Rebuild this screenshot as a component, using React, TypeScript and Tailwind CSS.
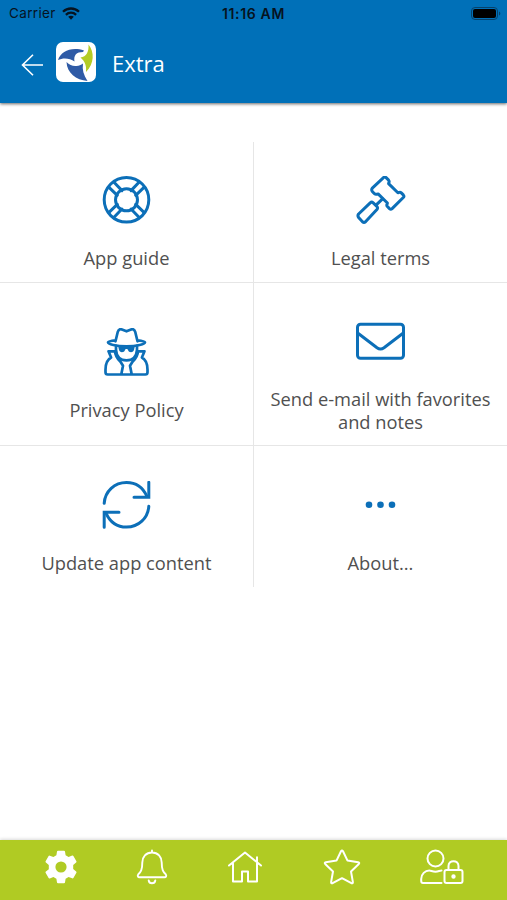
import type { ReactNode } from 'react'

export default function App() {
  return (
    <div className="flex h-[900px] w-[507px] flex-col overflow-hidden bg-white font-['Open_Sans',sans-serif]">
      <Header />
      <Menu />
      <BottomNav />
    </div>
  )
}

function StatusBar() {
  return (
    <div className="grid h-[26px] grid-cols-3 items-center pl-[9px] pr-[6px] font-[Inter,sans-serif] text-[13.5px] text-[#06131f]">
      <div className="flex items-center gap-[6px]">
        <span className="tracking-[0.35px]">Carrier</span>
        <svg width="18" height="13" viewBox="0 0 18 13" fill="none" stroke="currentColor" strokeWidth="2.3">
          <path d="M1 4.8C5.5.4 12.5.4 17 4.8" />
          <path d="M3.9 7.8c2.9-2.8 7.3-2.8 10.2 0" />
          <path d="M6.2 9.8c1.600-1.400 4-1.400 5.600 0L9 12.700z" fill="currentColor" stroke="none" />
        </svg>
      </div>
      <span className="-ml-[3px] text-center text-[14px] font-semibold tracking-[0.65px]">11:16 AM</span>
      <svg className="justify-self-end" width="30" height="13" viewBox="0 0 30 13">
        <rect x=".5" y=".5" width="26" height="12" rx="3.5" fill="none" stroke="#06426b" />
        <rect x="2" y="2" width="23" height="9" rx="2" fill="#000" />
        <path d="M28 4.500c1.800.6 1.800 3.400 0 4z" fill="#06426b" />
      </svg>
    </div>
  )
}

function Header() {
  return (
    <header className="relative h-[103px] shrink-0 bg-[#0070b8] shadow-[0_1px_3px_rgba(0,0,0,0.6)]">
      <StatusBar />
      <div className="flex h-[72px] items-center pl-[21px] text-white">
        <svg className="mt-[5px]" width="23" height="22" viewBox="0 0 23 22" fill="none" stroke="currentColor" strokeWidth="1.6">
          <path d="M22 11H1.500M12 .8L1.500 11 12 21.200" />
        </svg>
        <Logo />
        <h1 className="ml-[16px] mt-[2px] text-[22px] leading-7">Extra</h1>
      </div>
    </header>
  )
}

function Logo() {
  return (
    <svg className="ml-3" width="40" height="40" viewBox="0 0 40 40">
      <rect width="40" height="40" rx="7" fill="#fff" />
      <path d="M2 18C5 9.500 15 4.500 28 8.500l-1 1.500C20.500 10 17.500 13 18.500 19.500 14 16 7 15.500 2 18z" fill="#2f5ba6" />
      <path d="M32.500 2.500C38.500 10 38.500 21.500 30 30c.5-6-.5-10-5.500-14.500 6-.5 8.500-6 8-13z" fill="#b4cc25" />
      <path d="M10.500 20c3 3 6.500 4.500 10 4 2.500-.2 4.500-1 6.500-2.500-1 6 .5 11.500 4.500 17.500C20 38 11 31 10.500 20z" fill="#2f5ba6" />
    </svg>
  )
}

function Menu() {
  return (
    <main className="flex-1 pt-[39px]">
      <div className="grid grid-cols-[254px_253px] grid-rows-[141px_163px_141px]">
        <Tile label="App guide" className="border-b border-r" icon={<LifeRing />} />
        <Tile label="Legal terms" className="border-b" icon={<Gavel />} />
        <Tile label="Privacy Policy" className="border-b border-r" icon={<Spy />} />
        <Tile label="Send e-mail with favorites and notes" className="border-b" icon={<Envelope />} />
        <Tile label="Update app content" className="border-r" icon={<Sync />} />
        <Tile label="About..." icon={<Dots />} />
      </div>
    </main>
  )
}

function Tile({ label, icon, className = '' }: { label: string; icon: ReactNode; className?: string }) {
  return (
    <button type="button" className={`flex flex-col items-center justify-center border-[#e6e6e6] px-3 pb-3 pt-[33px] ${className}`}>
      {icon}
      <span className="mt-[22px] text-[18.300px] leading-[23px] text-[#505050]">{label}</span>
    </button>
  )
}

function TileIcon({ children }: { children: ReactNode }) {
  return (
    <svg className="shrink-0" width="50" height="48" viewBox="-0.500 0.200 50 48" fill="none" stroke="#0c6fb8" strokeWidth="3" strokeLinecap="round" strokeLinejoin="round">
      {children}
    </svg>
  )
}

function LifeRing() {
  return (
    <TileIcon>
      <circle cx="24" cy="24" r="22.300" />
      <circle cx="24" cy="24" r="11" />
      <path d="M6.500 11.500l8.300 8M11.500 6.500l8 8.300M41.500 11.500l-8.300 8M36.500 6.500l-8 8.300M6.500 36.500l8.300-8M11.500 41.500l8-8.300M41.500 36.500l-8.300-8M36.500 41.500l-8-8.300" />
    </TileIcon>
  )
}

function Gavel() {
  return (
    <TileIcon>
      <path d="M15.800 12.300L27 1.800q1.300-1.200 2.600 0l2.500 2.500q1 1.200.2 2.700l-.2.800 9.300 9.200 1-.3q1.300-.6 2.400.4l2 2q1.200 1.300 0 2.600L35.600 32.800q-1.300 1.200-2.600 0l-2.100-2.100q-1-1.100-.3-2.500l.3-1-9.300-9.100-1 .2q-1.500.6-2.600-.4l-2.200-2.200q-1.200-1.700 0-3.400z" />
      <path d="M26 23l-6.500 6.300" />
      <path d="M2.100 38.200L13.700 27q1.500-1.300 3 0l3.700 3.600q1.300 1.500 0 3L9 46q-1.500 1.200-3 0l-3.900-4.200q-1.300-1.800 0-3.600z" />
    </TileIcon>
  )
}

function Spy() {
  return (
    <TileIcon>
      <path d="M13 13.500l2.300-9.500q.9-3 3.500-2.500l5.200 2 5.200-2q2.600-.5 3.500 2.500l2.300 9.500M13 12.500c-3 .3-7.200 1-7.500 2 0 2 8 4 18.500 4s18.500-2 18.500-4c-.3-1-4.500-1.700-7.500-2" strokeWidth="2.700" />
      <path d="M13.500 18v4C14 29.500 18.500 32.500 24 32.500S34 29.500 34.500 22v-4" strokeWidth="2.700" />
      <path d="M15.500 17.500h17l-.8 4c-.6 3.800-5.400 3.700-6.200.7-.4-1.400-2.600-1.400-3 0-.8 3-5.600 3.100-6.200-.7z" fill="#0c6fb8" stroke="none" />
      <path d="M12.500 23.500H6l2.600 6.200C5.200 31.500 3 36.500 3 42v2.500q0 2.200 2.200 2.200h37.600q2.200 0 2.200-2.200V42c0-5.500-2.200-10.500-5.600-12.300l2.600-6.200h-6.500M12.500 23.500c.3 5 2.500 7.500 5.500 10.500l2.500 4-1.700 8.500M35.500 23.500c-.3 5-2.500 7.500-5.500 10.500l-2.500 4 1.700 8.500" strokeWidth="2.700" />
    </TileIcon>
  )
}

function Envelope() {
  return (
    <TileIcon>
      <rect x="1" y="7.500" width="46" height="34" rx="3" />
      <path d="M1.500 16.500l19 14.500q3.500 2.500 7 0l19-14.500" />
    </TileIcon>
  )
}

function Sync() {
  return (
    <TileIcon>
      <path d="M1.700 22.500C2.500 10.500 12 1.700 24 1.700c9 0 16.500 5 20.500 14M46.300 25.500C45.500 37.500 36 46.300 24 46.300c-9 0-16.500-5-20.500-14" />
      <path d="M46.300 1.500v15H31.500M1.700 46.500v-15h14.800" strokeLinejoin="miter" />
    </TileIcon>
  )
}

function Dots() {
  return (
    <TileIcon>
      <g fill="#0c6fb8" stroke="none">
        <circle cx="12.500" cy="24" r="3.300" />
        <circle cx="24" cy="24" r="3.300" />
        <circle cx="35.500" cy="24" r="3.300" />
      </g>
    </TileIcon>
  )
}

function BottomNav() {
  return (
    <nav className="flex h-[60px] items-center bg-[#b0cb23] pb-[6px] pl-[44px] text-white shadow-[0_-1px_3px_rgba(0,0,0,0.15)]">
      <svg width="34" height="34" viewBox="0 0 34 34" fill="currentColor" fillRule="evenodd">
        <path d="M13 1.500q.2-.8 1-.8h6q.8 0 1 .8l.6 3.800 3 1.700 3.600-1.400q.8-.3 1.200.4l3 5.200q.4.700-.3 1.200l-2.900 2.500v4.200l2.900 2.400q.7.500.3 1.200l-3 5.200q-.4.700-1.200.4l-3.600-1.300-3 1.700-.6 3.800q-.2.800-1 .8h-6q-.8 0-1-.8l-.6-3.800-3-1.700L5.800 28.400q-.8.300-1.200-.4l-3-5.200q-.4-.7.300-1.200l2.900-2.400v-4.200l-2.900-2.500q-.7-.5-.3-1.200l3-5.200q.4-.7 1.200-.4L9.400 7l3-1.700zM17 11.400a5.600 5.600 0 100 11.200 5.600 5.600 0 000-11.200z" />
      </svg>
      <svg className="ml-[57px]" width="34" height="36" viewBox="0 0 34 36" fill="none" stroke="currentColor" strokeWidth="1.900" strokeLinecap="round" strokeLinejoin="round">
        <path d="M17 1.500v2M17 3.500c-6 0-9.700 4.500-9.700 10 0 7.500-1.600 9.500-4 11.800-1.100 1.300-.4 3 1.200 3h25c1.600 0 2.300-1.700 1.200-3-2.400-2.300-4-4.300-4-11.800 0-5.500-3.700-10-9.700-10z" />
        <path d="M13.700 31.500c.5 3.700 6.100 3.700 6.600 0" />
      </svg>
      <svg className="ml-[59px]" width="34" height="32" viewBox="0 0 34 32" fill="none" stroke="currentColor" strokeWidth="2" strokeLinecap="round" strokeLinejoin="round">
        <path d="M1 14.500L17 1.500l16 13M5 12.500v18h9V20.500h6v10h9v-18M29 11V6.300" />
      </svg>
      <svg className="ml-[61px]" width="38" height="36" viewBox="0 0 38 36" fill="none" stroke="currentColor" strokeWidth="2" strokeLinejoin="round">
        <path d="M18 2.300q1-1.700 2 0l4.500 9.300 10.700 1.600q1.700.4.600 1.800l-7.800 7.500 1.900 10.600q.1 1.700-1.500 1.100L19 29.200l-9.400 5q-1.600.6-1.500-1.100L10 22.500 2.200 15q-1.100-1.400.6-1.800l10.700-1.600z" />
      </svg>
      <svg className="ml-[59px]" width="45" height="36" viewBox="0 0 45 36" fill="none" stroke="currentColor" strokeWidth="2" strokeLinecap="round" strokeLinejoin="round">
        <circle cx="15.500" cy="9.500" r="8" />
        <path d="M21.500 34H3q-1.800 0-1.800-2v-2c0-5 4-8.500 8-8.500 2 0 3 1.200 6.300 1.200 3 0 4-1.200 6-1.200" />
        <rect x="24.500" y="21" width="18" height="13" rx="2" />
        <path d="M28.500 21v-4c0-6.500 10-6.500 10 0v4" />
        <circle cx="33.500" cy="27.500" r="1.200" fill="currentColor" />
      </svg>
    </nav>
  )
}
